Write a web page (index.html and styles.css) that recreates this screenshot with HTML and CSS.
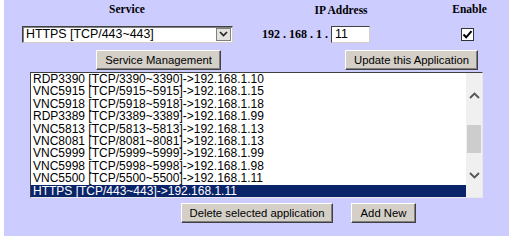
FILE: index.html
```html
<!DOCTYPE html>
<html lang="en">
<head>
  <meta charset="UTF-8" />
  <title>Application Settings</title>
  <link rel="stylesheet" href="styles.css">
</head>
<body>
  <div class="panel">
    <div class="row heads">
      <div class="col-service">Service</div>
      <div class="col-ip">IP Address</div>
      <div class="col-enable">Enable</div>
    </div>

    <div class="row fields">
      <div class="col-service">
        <div class="select">
          <span class="select-text">HTTPS [TCP/443~443]</span>
          <span class="select-btn">
            <svg width="9" height="6" viewBox="0 0 9 6"><path d="M1 1 L4.5 4.5 L8 1" fill="none" stroke="#222" stroke-width="1.6"/></svg>
          </span>
        </div>
      </div>
      <div class="col-ip ip-cell">
        <span class="ip-prefix">192 . 168 . 1 .</span>
        <span class="ip-input">11</span>
      </div>
      <div class="col-enable check-cell">
        <span class="check">
          <svg width="11" height="11" viewBox="0 0 11 11"><path d="M1.5 5.5 L4.2 8.3 L9.5 2.2" fill="none" stroke="#000" stroke-width="2"/></svg>
        </span>
      </div>
    </div>

    <div class="row actions">
      <button class="btn btn-manage">Service Management</button>
      <button class="btn btn-update">Update this Application</button>
    </div>

    <div class="listbox">
      <div class="items">
        <div class="item">RDP3390 [TCP/3390~3390]-&gt;192.168.1.10</div>
        <div class="item">VNC5915 [TCP/5915~5915]-&gt;192.168.1.15</div>
        <div class="item">VNC5918 [TCP/5918~5918]-&gt;192.168.1.18</div>
        <div class="item">RDP3389 [TCP/3389~3389]-&gt;192.168.1.99</div>
        <div class="item">VNC5813 [TCP/5813~5813]-&gt;192.168.1.13</div>
        <div class="item">VNC8081 [TCP/8081~8081]-&gt;192.168.1.13</div>
        <div class="item">VNC5999 [TCP/5999~5999]-&gt;192.168.1.99</div>
        <div class="item">VNC5998 [TCP/5998~5998]-&gt;192.168.1.98</div>
        <div class="item">VNC5500 [TCP/5500~5500]-&gt;192.168.1.11</div>
        <div class="item selected">HTTPS [TCP/443~443]-&gt;192.168.1.11</div>
      </div>
      <div class="scrollbar">
        <div class="arrow">
          <svg width="11" height="7" viewBox="0 0 11 7"><path d="M1 6 L5.5 1.5 L10 6" fill="none" stroke="#555" stroke-width="1.8"/></svg>
        </div>
        <div class="track">
          <div class="thumb"></div>
        </div>
        <div class="arrow">
          <svg width="11" height="7" viewBox="0 0 11 7"><path d="M1 1 L5.5 5.5 L10 1" fill="none" stroke="#555" stroke-width="1.8"/></svg>
        </div>
      </div>
    </div>

    <div class="row bottom">
      <button class="btn btn-delete">Delete selected application</button>
      <button class="btn btn-add">Add New</button>
    </div>
  </div>
</body>
</html>
```

FILE: styles.css
```css
body {
  margin: 0;
  background-color: #fff;
  font-family: 'Liberation Sans', Arial, sans-serif;
  font-size: 12px;
  color: #000;
}

.panel {
  background-color: #ccccff;
  margin-left: 4px;
  width: 505px;
  height: 236px;
}

.row {
  display: flex;
}

.col-service {
  width: 246px;
  text-align: center;
}

.col-ip {
  width: 182px;
  text-align: center;
}

.col-enable {
  width: 77px;
  text-align: center;
}

.heads {
  padding-top: 3px;
  height: 18px;
  font-family: 'Liberation Serif', 'Times New Roman', serif;
  font-weight: bold;
  font-size: 11.5px;
}

.heads .col-ip {
  padding-top: 1px;
}

.heads .col-enable {
  padding-right: 2px;
  box-sizing: border-box;
}

.fields {
  margin-top: 4px;
  height: 18px;
  align-items: center;
}

.fields .col-service {
  text-align: left;
}

.select {
  margin-left: 18px;
  width: 211px;
  height: 17px;
  box-sizing: border-box;
  background: #fff;
  border-top: 1px solid #404040;
  border-left: 1px solid #404040;
  border-right: 1px solid #d4d0c8;
  border-bottom: 1px solid #d4d0c8;
  box-shadow: inset 1px 1px 0 #808080;
  display: flex;
  align-items: center;
  justify-content: space-between;
}

.select-text {
  padding-left: 3px;
  line-height: 15px;
  font-size: 12.4px;
}

.select-btn {
  width: 15px;
  height: 13px;
  margin-right: 1px;
  box-sizing: border-box;
  background: #e4e2dc;
  border: 1px solid #808080;
  display: flex;
  align-items: center;
  justify-content: center;
}

.ip-cell {
  display: flex;
  align-items: center;
  padding-left: 12px;
  box-sizing: border-box;
}

.ip-prefix {
  font-family: 'Liberation Serif', 'Times New Roman', serif;
  font-weight: bold;
  font-size: 12px;
  margin-right: 3px;
}

.ip-input {
  width: 39px;
  height: 17px;
  box-sizing: border-box;
  background: #fff;
  border-top: 1px solid #404040;
  border-left: 1px solid #404040;
  border-right: 1px solid #d4d0c8;
  border-bottom: 1px solid #d4d0c8;
  padding-left: 3px;
  line-height: 15px;
  font-size: 12.4px;
  text-align: left;
}

.check-cell {
  display: flex;
  justify-content: center;
  padding-right: 7px;
  box-sizing: border-box;
}

.check {
  width: 13px;
  height: 13px;
  box-sizing: border-box;
  background: #fff;
  border: 1px solid #333;
  display: flex;
  align-items: center;
  justify-content: center;
}

.btn {
  font-family: 'Liberation Sans', Arial, sans-serif;
  font-size: 11.3px;
  color: #000;
  background-color: #d4d0c8;
  height: 20px;
  padding: 0;
  white-space: nowrap;
  border-top: 1px solid #fff;
  border-left: 1px solid #fff;
  border-right: 1px solid #404040;
  border-bottom: 1px solid #404040;
  box-shadow: inset -1px -1px 0 #808080;
  border-radius: 0;
}

.actions {
  margin-top: 7px;
  height: 22px;
}

.btn-manage {
  margin-left: 92px;
  width: 125px;
}

.btn-update {
  margin-left: 124px;
  width: 133px;
}

.listbox {
  margin-left: 26px;
  width: 453px;
  height: 126px;
  box-sizing: border-box;
  background: #fff;
  border-top: 1px solid #404040;
  border-left: 1px solid #404040;
  border-right: 1px solid #e8e8e8;
  border-bottom: 1px solid #e8e8e8;
  display: flex;
}

.items {
  flex: 1;
  overflow: hidden;
}

.item {
  height: 12.4px;
  line-height: 12.4px;
  padding-left: 2px;
  white-space: nowrap;
}

.item.selected {
  background-color: #0a246a;
  color: #fff;
}

.scrollbar {
  width: 16px;
  background: #f0f0f0;
  display: flex;
  flex-direction: column;
}

.arrow {
  height: 44px;
  display: flex;
  align-items: center;
  justify-content: center;
}

.track {
  flex: 1;
  display: flex;
  flex-direction: column;
  justify-content: flex-end;
}

.thumb {
  height: 28px;
  background: #cdcdcd;
  margin: 0 1px;
}

.bottom {
  margin-top: 5px;
  padding-left: 177px;
  gap: 18px;
}

.btn-delete {
  width: 152px;
}

.btn-add {
  width: 65px;
}
```
